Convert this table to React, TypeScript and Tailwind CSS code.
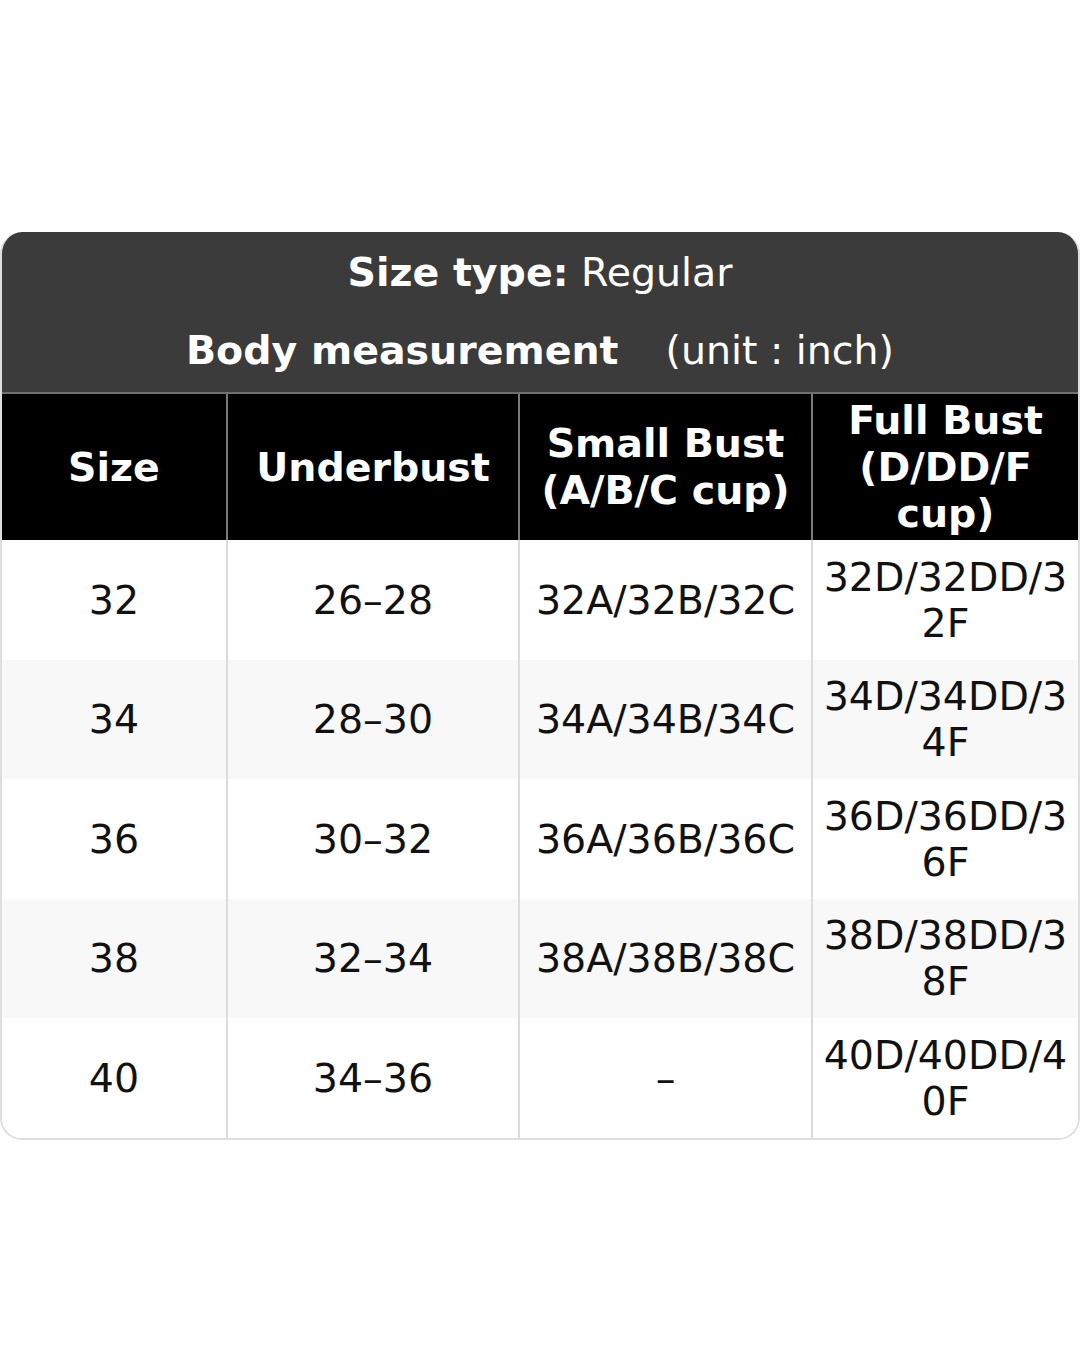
import React from 'react';

const rows = [
  { size: '32', under: '26–28', small: '32A/32B/32C', full: '32D/32DD/32F' },
  { size: '34', under: '28–30', small: '34A/34B/34C', full: '34D/34DD/34F' },
  { size: '36', under: '30–32', small: '36A/36B/36C', full: '36D/36DD/36F' },
  { size: '38', under: '32–34', small: '38A/38B/38C', full: '38D/38DD/38F' },
  { size: '40', under: '34–36', small: '–', full: '40D/40DD/40F' },
];

const headers = ['Size', 'Underbust', 'Small Bust (A/B/C cup)', 'Full Bust (D/DD/F cup)'];

const App = () => {
  return (
    <div className="w-[1080px] h-[1350px] bg-white pt-[232px]" style={{ fontFamily: '"DejaVu Sans", sans-serif' }}>
      <div className="border-2 border-t-0 border-[#dedede] rounded-[22px] overflow-hidden">
        {/* Title */}
        <div className="bg-[#3b3b3b] text-white text-[39.5px] leading-[1.15]">
          <div className="h-[80px] pt-[2px] flex items-center justify-center">
            <span className="font-bold">Size type:</span>
            <span>&nbsp;Regular</span>
          </div>
          <div className="h-[80px] pb-[2px] flex items-center justify-center">
            <span className="font-bold">Body measurement</span>
            <span className="ml-[47px]">(unit : inch)</span>
          </div>
        </div>

        {/* Column headers */}
        <div className="grid grid-cols-[224px_292px_293px_267px] bg-black border-t-2 border-[#6e6e6e] h-[148px]">
          {headers.map((h, i) => (
            <div
              key={i}
              className={`flex items-center justify-center text-center px-[6px] text-white font-bold text-[39.5px] leading-[1.18] ${i > 0 ? 'border-l-2 border-[#7a7a7a]' : ''}`}
            >
              {h}
            </div>
          ))}
        </div>

        {/* Body rows */}
        {rows.map((r, i) => (
          <div
            key={i}
            className={`grid grid-cols-[224px_292px_293px_267px] h-[119.5px] text-[39.5px] leading-[1.17] text-[#111] ${i % 2 === 1 ? 'bg-[#f8f8f8]' : 'bg-white'}`}
          >
            <div className="flex items-center justify-center text-center">{r.size}</div>
            <div className="flex items-center justify-center text-center border-l-2 border-[#dcdcdc]">{r.under}</div>
            <div className="flex items-center justify-center text-center border-l-2 border-[#dcdcdc]">{r.small}</div>
            <div className="flex items-center justify-center text-center border-l-2 border-[#dcdcdc] px-[8px] break-all">
              {r.full}
            </div>
          </div>
        ))}
      </div>
    </div>
  );
};

export default App;
